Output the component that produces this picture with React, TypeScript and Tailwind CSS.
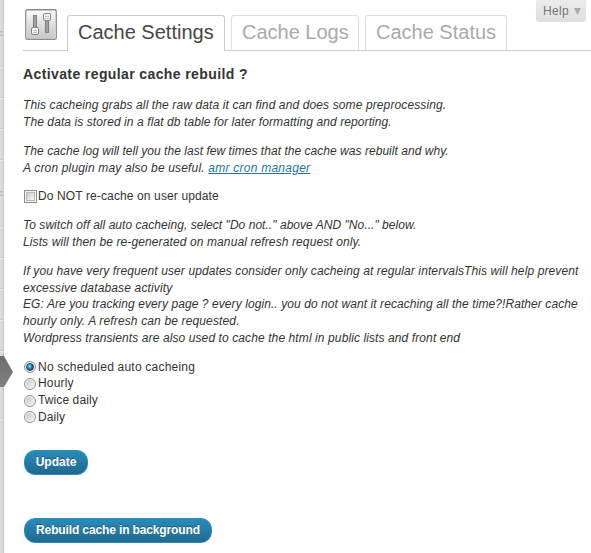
import type { ReactNode } from "react";

const separators = [66, 97, 128, 159, 226, 257, 288, 319, 350, 418];
const groupBreaks = [31, 191];

function SettingsIcon() {
  return (
    <svg width="32" height="31" viewBox="0 0 32 31" className="block">
      <defs>
        <linearGradient id="plate" x1="0" y1="0" x2="0" y2="1">
          <stop offset="0" stopColor="#fafafa" />
          <stop offset="0.5" stopColor="#dedede" />
          <stop offset="1" stopColor="#c8c8c8" />
        </linearGradient>
      </defs>
      <rect x="0.75" y="0.75" width="30.5" height="29.5" rx="1.5" fill="#fff" stroke="#8b8b8b" strokeWidth="1.3" />
      <rect x="2" y="2" width="28" height="27" fill="url(#plate)" />
      <rect x="8.5" y="6.5" width="3" height="15" fill="#a0a0a0" stroke="#808080" />
      <rect x="6.5" y="18.5" width="7" height="7" rx="1.5" fill="#f5f5f5" stroke="#858585" />
      <path d="M8 21.5h4M8 23.5h4" stroke="#c0c0c0" />
      <rect x="20.5" y="9.5" width="3" height="14" fill="#a0a0a0" stroke="#808080" />
      <rect x="18.5" y="4.5" width="7" height="7" rx="1.5" fill="#f5f5f5" stroke="#858585" />
      <path d="M20 7.5h4M20 9.5h4" stroke="#c0c0c0" />
    </svg>
  );
}

function Tab({ active, className, children }: { active?: boolean; className: string; children: ReactNode }) {
  const look = active
    ? "h-[36px] border-[#ccc] bg-white text-[#464646]"
    : "h-[35px] border-[#dfdfdf] text-[#aaa]";
  return (
    <div className={`shrink-0 rounded-t-[3px] border border-b-0 pl-[10px] text-[20px] leading-[33px] whitespace-nowrap ${look} ${className}`}>
      {children}
    </div>
  );
}

function Line({ className = "", children }: { className?: string; children: ReactNode }) {
  return <span className={`block whitespace-nowrap ${className}`}>{children}</span>;
}

function Radio({ checked, className = "", children }: { checked?: boolean; className?: string; children: ReactNode }) {
  return (
    <label className={`flex h-[16.7px] items-center ${className}`}>
      <span className="mr-[2px] ml-[1px] flex size-[12px] shrink-0 items-center justify-center rounded-full border border-[#8e8f8f] bg-[#f6f6f6]">
        <span
          className={`size-[8px] rounded-full ${
            checked
              ? "border border-[#17384f] bg-radial-[at_40%_35%] from-[#7fdcff] via-[#1c82b5] to-[#0b2f49]"
              : "bg-linear-to-br from-[#c5c9cd] to-[#f3f3f3]"
          }`}
        />
      </span>
      {children}
    </label>
  );
}

function Button({ className, children }: { className: string; children: ReactNode }) {
  return (
    <button
      className={`flex h-[25px] items-start justify-center rounded-[11px] border border-[#298cba] bg-linear-to-b from-[#298cba] to-[#21698f] font-bold leading-[22px] whitespace-nowrap text-white [text-shadow:0_-1px_0_rgba(0,0,0,0.3)] ${className}`}
    >
      {children}
    </button>
  );
}

export default function App() {
  return (
    <div className="relative flex h-[553px] w-[591px] overflow-hidden bg-white font-['Liberation_Sans',Arial,sans-serif] text-[12px] leading-[16.8px] text-[#333]">
      <aside className="relative w-[4px] shrink-0 border-r border-[#cacaca] bg-linear-to-r from-[#e0e0e0] to-[#d4d4d4]">
        {separators.map((y) => (
          <span key={y} className="absolute left-0 h-[2px] w-[3px] border-t border-[#cbcbcb] bg-[#ececec]" style={{ top: y }} />
        ))}
        {groupBreaks.map((y) => (
          <span key={y} className="absolute left-0 h-[5px] w-[3px] border-y border-[#bdbdbd] bg-[#d2d2d2]" style={{ top: y }} />
        ))}
        <svg width="13" height="32" viewBox="0 0 13 32" className="absolute top-[356px] left-0">
          <defs>
            <linearGradient id="pointer" x1="0" y1="0" x2="0" y2="1">
              <stop offset="0" stopColor="#6d6d6d" />
              <stop offset="1" stopColor="#808080" />
            </linearGradient>
          </defs>
          <path d="M0 0H4L13 16L4 31H0Z" fill="url(#pointer)" />
        </svg>
      </aside>
      <div className="absolute top-0 right-[5px] flex h-[22px] w-[50px] items-center rounded-b-[3px] bg-linear-to-b from-[#ececec] to-[#dfdfdf] pl-[7px] text-[#777]">
        <span className="tracking-[0.3px]">Help</span>
        <svg width="7" height="7" className="ml-[5px]">
          <path d="M0 0H7L3.5 7Z" fill="#aaa" />
        </svg>
      </div>
      <main className="ml-[19px] flex-1">
        <header className="relative flex h-[51px] items-end border-b border-[#ccc]">
          <div className="mb-[10px] ml-[2px] w-[42px] shrink-0">
            <SettingsIcon />
          </div>
          <Tab active className="-mb-px w-[158px]">Cache Settings</Tab>
          <Tab className="ml-[6px] w-[128px]">Cache Logs</Tab>
          <Tab className="ml-[6px] w-[142px]">Cache Status</Tab>
        </header>
        <h3 className="mt-[14px] h-[32.25px] text-[14px] leading-[18px] font-bold tracking-[0.39px]">Activate regular cache rebuild ?</h3>
        <p className="mb-[12px] italic">
          <Line className="tracking-[0.117px]">This cacheing grabs all the raw data it can find and does some preprocessing.</Line>
          <Line className="tracking-[0.09px]">The data is stored in a flat db table for later formatting and reporting.</Line>
        </p>
        <p className="mb-[12px] italic">
          <Line className="tracking-[0.037px]">The cache log will tell you the last few times that the cache was rebuilt and why.</Line>
          <Line className="tracking-[0.165px]">
            A cron plugin may also be useful. <a className="tracking-[0.25px] text-[#21759b] underline">amr cron manager</a>
          </Line>
        </p>
        <label className="mb-[12px] flex h-[16.8px] items-center tracking-[0.12px]">
          <span className="mr-[1px] ml-[1px] flex size-[13px] items-center justify-center border border-[#8e8f8f] bg-[#f4f4f4]">
            <span className="size-[9px] border border-[#b5babf] bg-linear-to-br from-[#cbcfd5] to-[#f6f6f6]" />
          </span>
          Do NOT re-cache on user update
        </label>
        <p className="mb-[12px] italic">
          <Line className="tracking-[0.04px]">To switch off all auto cacheing, select "Do not.." above AND "No..." below.</Line>
          <Line className="tracking-[0.11px]">Lists will then be re-generated on manual refresh request only.</Line>
        </p>
        <p className="mb-[12px] italic">
          <Line className="tracking-[0.107px]">If you have very frequent user updates consider only cacheing at regular intervalsThis will help prevent</Line>
          <Line className="tracking-[0.15px]">excessive database activity</Line>
          <Line className="tracking-[0.08px]">EG: Are you tracking every page ? every login.. you do not want it recaching all the time?!Rather cache</Line>
          <Line className="tracking-[0.14px]">hourly only. A refresh can be requested.</Line>
          <Line className="tracking-[0.1px]">Wordpress transients are also used to cache the html in public lists and front end</Line>
        </p>
        <div>
          <Radio checked className="tracking-[0.22px]">No scheduled auto cacheing</Radio>
          <Radio className="tracking-[0.17px]">Hourly</Radio>
          <Radio className="tracking-[0.1px]">Twice daily</Radio>
          <Radio className="tracking-[0.1px]">Daily</Radio>
        </div>
        <Button className="mt-[24.25px] ml-[1px] w-[64px]">Update</Button>
        <Button className="mt-[43px] ml-[1px] w-[188px] tracking-[-0.13px]">Rebuild cache in background</Button>
      </main>
    </div>
  );
}
